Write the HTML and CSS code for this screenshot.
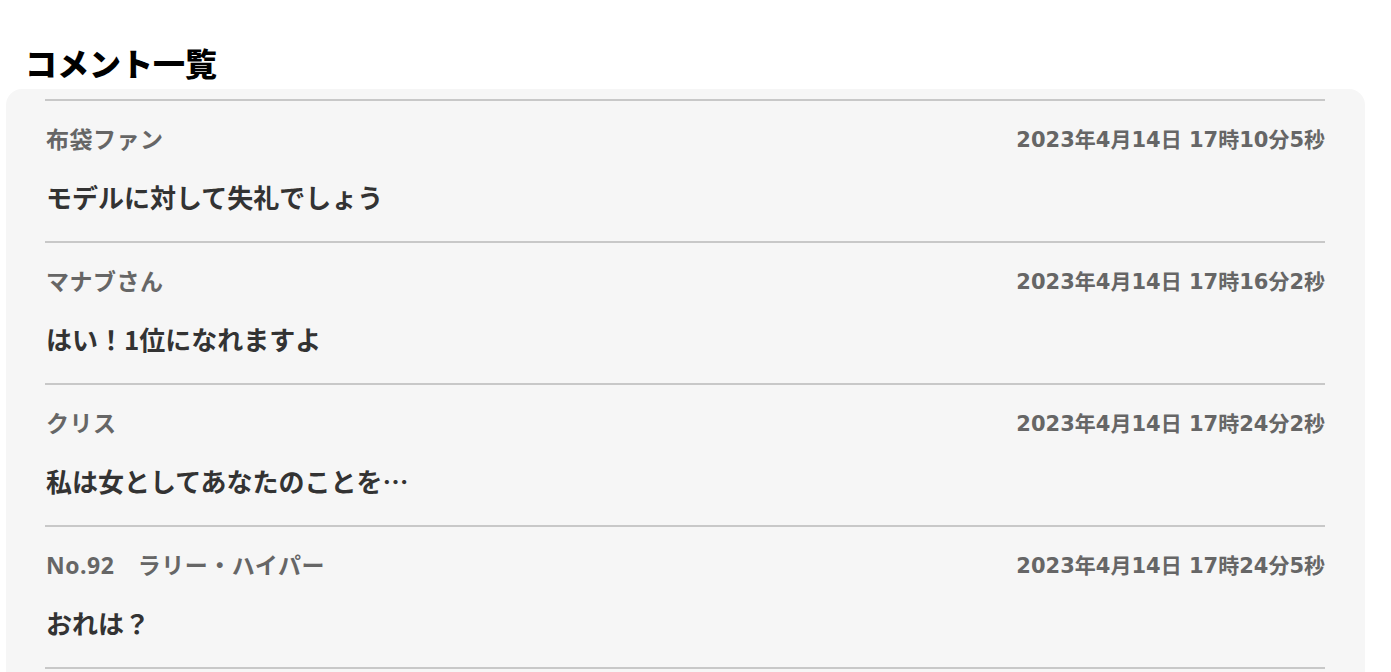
FILE: index.html
```html
<!DOCTYPE html>
<html lang="ja">
<head>
<meta charset="utf-8">
<title>コメント一覧</title>
<link rel="stylesheet" href="styles.css">
</head>
<body>
<main class="page">
  <h1 class="title">コメント一覧</h1>
  <section class="card">
    <article class="comment">
      <div class="meta"><span class="name">布袋ファン</span><span class="date">2023年4月14日 17時10分5秒</span></div>
      <p class="body">モデルに対して失礼でしょう</p>
    </article>
    <article class="comment">
      <div class="meta"><span class="name">マナブさん</span><span class="date">2023年4月14日 17時16分2秒</span></div>
      <p class="body">はい！1位になれますよ</p>
    </article>
    <article class="comment">
      <div class="meta"><span class="name">クリス</span><span class="date">2023年4月14日 17時24分2秒</span></div>
      <p class="body">私は女としてあなたのことを…</p>
    </article>
    <article class="comment">
      <div class="meta"><span class="name">No.92　ラリー・ハイパー</span><span class="date">2023年4月14日 17時24分5秒</span></div>
      <p class="body">おれは？</p>
    </article>
    <div class="end"></div>
  </section>
</main>
</body>
</html>
```

FILE: styles.css
```css
* { box-sizing: border-box; }
html, body { margin: 0; padding: 0; background: #fff; }
body {
  font-family: "Open Sans", "Noto Sans CJK JP", sans-serif;
  font-weight: 700;
}
.page {
  padding: 42px 26px 0 6px;
}
.title {
  margin: 0 0 7px 19px;
  font-size: 32px;
  line-height: 40px;
  font-weight: 900;
  color: #000;
  font-family: "Noto Sans CJK JP", sans-serif;
}
.card {
  background: #f6f6f6;
  border-radius: 16px;
  padding: 10px 40px 40px 39px;
  width: 1359px;
}
.comment {
  border-top: 2px solid #c8c8c8;
  padding: 18px 0 26px 0;
  display: flex;
  flex-direction: column;
  gap: 22px;
}
.meta {
  display: flex;
  justify-content: space-between;
  align-items: center;
  height: 38px;
}
.name {
  font-size: 23px;
  letter-spacing: 0.5px;
  color: #666;
  padding-left: 1px;
}
.date {
  font-family: "DejaVu Sans", "Noto Sans CJK JP", sans-serif;
  font-size: 21px;
  color: #666;
}
.body {
  margin: 0;
  height: 36px;
  line-height: 36px;
  font-family: "Noto Sans CJK JP", sans-serif;
  font-size: 26px;
  color: #333;
  padding-left: 1px;
}
.end {
  border-top: 2px solid #c8c8c8;
}
```
